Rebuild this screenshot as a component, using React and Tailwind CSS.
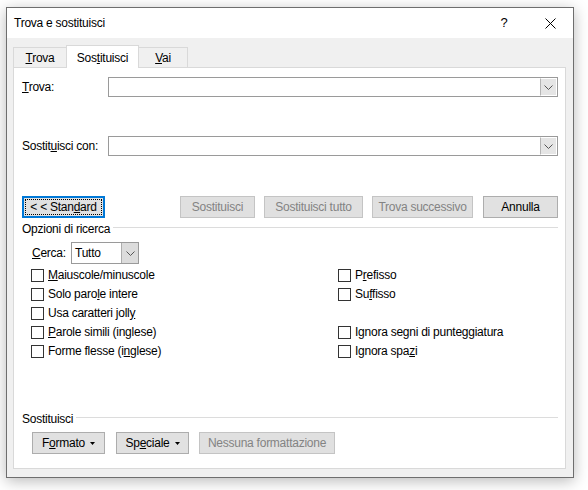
import React from 'react';

const Chevron = () => (
  <svg width="9" height="5" viewBox="0 0 9 5">
    <path d="M0.5 0.5 L4.5 4.5 L8.5 0.5" fill="none" stroke="#555" strokeWidth="1" />
  </svg>
);

const Caret = () => (
  <svg width="5" height="3" viewBox="0 0 5 3" className="ml-[5px]">
    <path d="M0 0 H5 L2.5 3 Z" fill="#000" />
  </svg>
);

const Btn = ({ disabled, className = '', children }) => (
  <div
    className={`h-[22px] flex items-center justify-center border ${
      disabled ? 'border-[#c4c4c4] bg-[#e0e0e0] text-[#838383]' : 'border-[#adadad] bg-[#e1e1e1] text-black'
    } ${className}`}
  >
    {children}
  </div>
);

const Combo = ({ className = '' }) => (
  <div className={`h-[20px] flex border border-[#9a9a9a] bg-white ${className}`}>
    <div className="flex-1" />
    <div className="w-[17px] flex items-center justify-center bg-[#e5e5e5] border border-white border-l-[#b5b5b5]">
      <Chevron />
    </div>
  </div>
);

const Check = ({ children }) => (
  <div className="h-[19px] flex items-center">
    <div className="w-[13px] h-[13px] border border-[#333] bg-white shrink-0" />
    <span className="ml-[4px] leading-[19px]">{children}</span>
  </div>
);

const Section = ({ children }) => (
  <div className="h-[16px] flex items-start">
    <span className="leading-[16px]">{children}</span>
    <div className="flex-1 h-px bg-[#dcdcdc] mt-[6px] ml-[3px]" />
  </div>
);

export default function App() {
  return (
    <div className="w-[588px] h-[490px] bg-white pl-[6px] pt-[7px] text-[12px] tracking-[-0.25px] text-black font-['Segoe_UI','Liberation_Sans',Arial,sans-serif]">
      <div className="w-[568px] h-[471px] border border-[#6e6e6e] bg-[#f0f0f0] shadow-[0_3px_14px_rgba(0,0,0,0.28)] flex flex-col">
        {/* Title bar */}
        <div className="h-[30px] bg-white flex items-center pl-[7px] shrink-0">
          <span>Trova e sostituisci</span>
          <div className="ml-auto flex h-full">
            <div className="w-[46px] flex items-center justify-center text-[13px]">?</div>
            <div className="w-[46px] flex items-center justify-center">
              <svg width="11" height="11" viewBox="0 0 11 11">
                <path d="M0.5 0.5 L10.5 10.5 M10.5 0.5 L0.5 10.5" stroke="#000" strokeWidth="1" />
              </svg>
            </div>
          </div>
        </div>

        {/* Body */}
        <div className="flex-1 pt-[7px] pl-[6px] pr-[7px] pb-[8px] flex flex-col">
          {/* Tabs */}
          <div className="h-[22px] flex items-end shrink-0">
            <div className="w-[53px] h-[20px] border-l border-t border-[#d9d9d9] bg-[#f0f0f0] flex items-center justify-center">
              <span><u>T</u>rova</span>
            </div>
            <div className="w-[73px] h-[23px] -mb-px border-l border-t border-r border-[#d9d9d9] bg-white relative z-10 flex items-start justify-center pt-[3px]">
              <span>Sos<u>t</u>ituisci</span>
            </div>
            <div className="w-[49px] h-[20px] border-t border-r border-[#d9d9d9] bg-[#f0f0f0] flex items-center justify-center">
              <span><u>V</u>ai</span>
            </div>
          </div>

          {/* Panel */}
          <div className="h-[402px] border border-[#d9d9d9] bg-white pl-[8px] pr-[7px] flex flex-col">
            <div className="mt-[9px] flex items-center h-[20px]">
              <span className="w-[86px]"><u>T</u>rova:</span>
              <Combo className="flex-1" />
            </div>

            <div className="mt-[39px] flex items-center h-[20px]">
              <span className="w-[86px]">Sostit<u>u</u>isci con:</span>
              <Combo className="flex-1" />
            </div>

            <div className="mt-[40px] flex items-center h-[22px]">
              <div className="w-[83px] h-[22px] border-2 border-[#0078d7] bg-[#e1e1e1] p-px">
                <div className="w-full h-full border border-dotted border-black flex items-center justify-center">
                  <span>{'< < '}Stan<u>d</u>ard</span>
                </div>
              </div>
              <Btn disabled className="w-[75px] ml-[75px]">Sostituisci</Btn>
              <Btn disabled className="w-[99px] ml-[9px]">Sostituisci tutto</Btn>
              <Btn disabled className="w-[101px] ml-[9px]">Trova successivo</Btn>
              <Btn className="w-[75px] ml-[10px]">Annulla</Btn>
            </div>

            <div className="mt-[3px]">
              <Section>Opzioni di ricerca</Section>
            </div>

            <div className="mt-[5px] pl-[10px] flex items-center h-[22px]">
              <span className="w-[39px]"><u>C</u>erca:</span>
              <div className="w-[68px] h-[22px] flex border border-[#9a9a9a] bg-white">
                <span className="flex-1 pl-[3px] leading-[20px]">Tutto</span>
                <div className="w-[17px] flex items-center justify-center bg-[#dcdcdc] border-l border-[#adadad]">
                  <Chevron />
                </div>
              </div>
            </div>

            <div className="mt-[2px] pl-[9px] flex">
              <div className="w-[307px] flex flex-col">
                <Check><u>M</u>aiuscole/minuscole</Check>
                <Check>Solo paro<u>l</u>e intere</Check>
                <Check>Usa caratteri joll<u>y</u></Check>
                <Check><u>P</u>arole simili (inglese)</Check>
                <Check>Forme flesse (i<u>n</u>glese)</Check>
              </div>
              <div className="flex flex-col">
                <Check>P<u>r</u>efisso</Check>
                <Check>Su<u>f</u>fisso</Check>
                <div className="h-[19px]" />
                <Check>I<u>g</u>nora segni di punteggiatura</Check>
                <Check>Ignora spa<u>z</u>i</Check>
              </div>
            </div>

            <div className="mt-[50px]">
              <Section>Sostituisci</Section>
            </div>

            <div className="mt-[5px] pl-[10px] flex items-center">
              <Btn className="w-[73px]">F<u>o</u>rmato<Caret /></Btn>
              <Btn className="w-[73px] ml-[11px]">Sp<u>e</u>ciale<Caret /></Btn>
              <Btn disabled className="w-[136px] ml-[10px]">Nessuna formattazione</Btn>
            </div>
          </div>
        </div>
      </div>
    </div>
  );
}
